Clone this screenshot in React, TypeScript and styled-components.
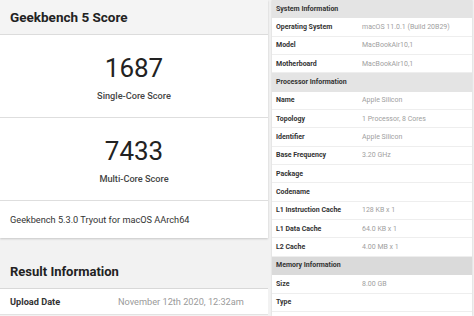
import React from 'react';
import styled, { createGlobalStyle } from 'styled-components';

const GlobalStyle = createGlobalStyle`
  html, body {
    margin: 0;
    padding: 0;
    background: #f2f2f2;
    font-family: Roboto, "Liberation Sans", Arial, sans-serif;
    color: #2b2b2b;
  }
`;

const Page = styled.div`
  width: 474px;
  height: 316px;
  overflow: hidden;
  display: grid;
  grid-template-columns: 268px 200px;
  column-gap: 4px;
  background: #f2f2f2;
`;

const LeftColumn = styled.div`
  display: flex;
  flex-direction: column;
`;

const ScoreCard = styled.section`
  background: #fff;
  box-shadow: 0 1px 2px rgba(0, 0, 0, 0.18);
  display: flex;
  flex-direction: column;
`;

const CardHeader = styled.h2`
  margin: 0;
  height: 35px;
  display: flex;
  align-items: center;
  padding: 0 10px;
  background: #f4f4f4;
  border-bottom: 1px solid #dcdcdc;
  font-size: 13.5px;
  font-weight: 700;
  color: #222;
  box-sizing: border-box;
`;

const ScoreBlock = styled.div`
  height: 83px;
  box-sizing: border-box;
  border-bottom: 1px solid #dedede;
  display: flex;
  flex-direction: column;
  align-items: center;
  justify-content: center;
  padding-top: 2px;
`;

const ScoreValue = styled.div`
  font-size: 26px;
  font-weight: 400;
  line-height: 30px;
  color: #222;
`;

const ScoreLabel = styled.div`
  margin-top: 7px;
  font-size: 9.2px;
  font-weight: 500;
  color: #444;
`;

const VersionRow = styled.div`
  height: 37px;
  display: flex;
  align-items: center;
  padding: 0 10px;
  font-size: 9.2px;
  color: #333;
`;

const SectionTitle = styled.h2`
  margin: 0;
  height: 51px;
  box-sizing: border-box;
  display: flex;
  align-items: flex-end;
  padding: 0 10px 9px;
  font-size: 13px;
  font-weight: 700;
  color: #222;
  border-bottom: 1px solid #d8d8d8;
`;

const InfoRow = styled.div`
  height: 25px;
  background: #fff;
  display: grid;
  grid-template-columns: 108px 1fr;
  align-items: center;
  padding: 0 10px;
  border-bottom: 1px solid #e2e2e2;
  font-size: 9.2px;
  white-space: nowrap;
`;

const RowLabel = styled.span`
  font-weight: 700;
  color: #333;
`;

const RowValue = styled.span`
  color: #9a9a9a;
`;

const SpecCard = styled.section`
  background: #fff;
  box-shadow: 0 0 2px rgba(0, 0, 0, 0.15);
  display: flex;
  flex-direction: column;
`;

const SpecRow = styled.div<{ $head?: boolean; $shade?: string }>`
  height: 18.35px;
  box-sizing: border-box;
  display: grid;
  grid-template-columns: 86px 1fr;
  align-items: center;
  padding: 0 4px;
  font-size: 7px;
  background: ${p => (p.$head ? p.$shade || '#e4e4e4' : '#fff')};
  border-bottom: 1px solid ${p => (p.$head ? 'transparent' : '#eeeeee')};
`;

const SpecLabel = styled.span`
  font-weight: 700;
  color: #333;
  white-space: nowrap;
`;

const SpecValue = styled.span`
  color: #a0a0a0;
  white-space: nowrap;
`;

const specs: Array<[string, string?] | { head: string; shade?: string }> = [
  { head: 'System Information' },
  ['Operating System', 'macOS 11.0.1 (Build 20B29)'],
  ['Model', 'MacBookAir10,1'],
  ['Motherboard', 'MacBookAir10,1'],
  { head: 'Processor Information' },
  ['Name', 'Apple Silicon'],
  ['Topology', '1 Processor, 8 Cores'],
  ['Identifier', 'Apple Silicon'],
  ['Base Frequency', '3.20 GHz'],
  ['Package', ''],
  ['Codename', ''],
  ['L1 Instruction Cache', '128 KB x 1'],
  ['L1 Data Cache', '64.0 KB x 1'],
  ['L2 Cache', '4.00 MB x 1'],
  { head: 'Memory Information', shade: '#dadada' },
  ['Size', '8.00 GB'],
  ['Type', ''],
];

const App = () => (
  <Page>
    <GlobalStyle />
    <LeftColumn>
      <ScoreCard>
        <CardHeader>Geekbench 5 Score</CardHeader>
        <ScoreBlock>
          <ScoreValue>1687</ScoreValue>
          <ScoreLabel>Single-Core Score</ScoreLabel>
        </ScoreBlock>
        <ScoreBlock>
          <ScoreValue>7433</ScoreValue>
          <ScoreLabel>Multi-Core Score</ScoreLabel>
        </ScoreBlock>
        <VersionRow>Geekbench 5.3.0 Tryout for macOS AArch64</VersionRow>
      </ScoreCard>
      <SectionTitle>Result Information</SectionTitle>
      <InfoRow>
        <RowLabel>Upload Date</RowLabel>
        <RowValue>November 12th 2020, 12:32am</RowValue>
      </InfoRow>
    </LeftColumn>
    <SpecCard>
      {specs.map((s, i) =>
        Array.isArray(s) ? (
          <SpecRow key={i}>
            <SpecLabel>{s[0]}</SpecLabel>
            <SpecValue>{s[1]}</SpecValue>
          </SpecRow>
        ) : (
          <SpecRow key={i} $head $shade={s.shade}>
            <SpecLabel>{s.head}</SpecLabel>
          </SpecRow>
        )
      )}
    </SpecCard>
  </Page>
);

export default App;
